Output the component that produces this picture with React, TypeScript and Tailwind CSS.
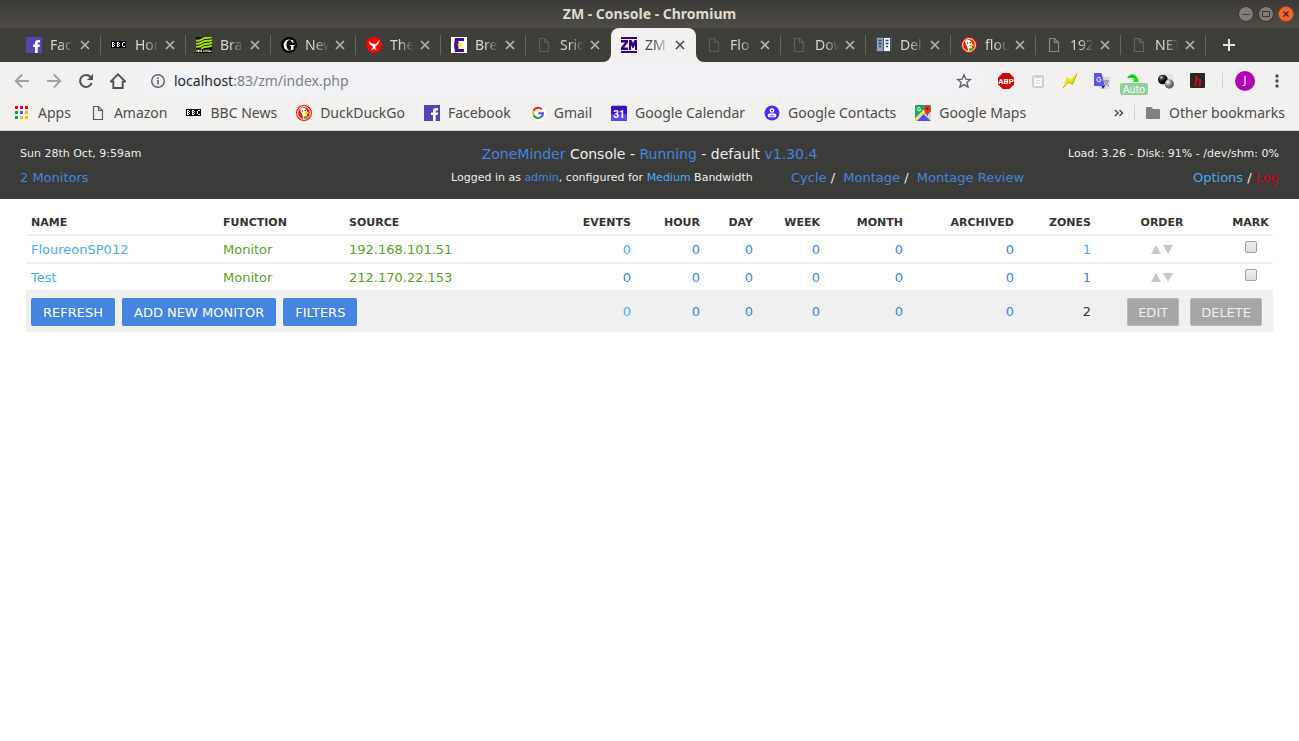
import type { ReactNode } from 'react';

const BLUE = 'text-[#4584dd]';
const SKY = 'text-[#4aabec]';

/* ---------- favicons ---------- */

function FacebookIcon() {
  return (
    <svg width="16" height="16" viewBox="0 0 16 16" aria-hidden="true">
      <rect width="16" height="16" fill="#5246b4" />
      <path d="M9 16V10H7V7.500H9V6C9 3.800 10.200 3 12 3H14V5.400H12.800C12 5.400 11.700 5.700 11.700 6.400V7.500H14L13.600 10H11.700V16Z" fill="#fff" />
    </svg>
  );
}

function BbcIcon() {
  return (
    <svg width="16" height="16" viewBox="0 0 16 16" aria-hidden="true" shapeRendering="crispEdges">
      <rect x="0" y="4" width="15" height="7" fill="#000" />
      <g fill="none" stroke="#fff" strokeWidth="1">
        <path d="M1.500 5V10M2 5.500H3M2 7.500H3M2 9.500H3M3.500 6V7M3.500 8V9" />
        <path d="M6.500 5V10M7 5.500H8M7 7.500H8M7 9.500H8M8.500 6V7M8.500 8V9" />
        <path d="M11.500 6V9M12 5.500H14M12 9.500H14" />
      </g>
    </svg>
  );
}

function MetOfficeIcon() {
  return (
    <svg width="16" height="16" viewBox="0 0 16 16" aria-hidden="true">
      <rect width="16" height="16" fill="#0b0f05" />
      <g fill="none" stroke="#a4e414" strokeWidth="2">
        <path d="M0 3.500C4 4.500 6 1.500 9 1S13 1.500 16 0" />
        <path d="M0 6.500C4 7.500 6 4.500 9 4S13 4.500 16 2.800" />
        <path d="M0 9.500C4 10.500 6 7.500 9 7S13 7.500 16 5.600" />
        <path d="M5 11.500C7 11 8 10 10 9.800S14 10 16 8.400" />
      </g>
      <path d="M1 12.500V15M2.500 13V15M4 12.500V15M5.500 13.500V15M8 13V15M10 12.500V15M12 12.500V15M13.500 13.500V15M15 13.500V15" stroke="#fff" strokeWidth="1" />
    </svg>
  );
}

function GuardianIcon() {
  return (
    <svg width="16" height="16" viewBox="0 0 16 16" aria-hidden="true">
      <circle cx="8" cy="8" r="8" fill="#000" />
      <path d="M8.500 2.400C4.500 2.400 2.700 5 2.700 8S4.500 13.600 8.500 13.600V12.900C6.500 12.700 5.500 11 5.500 8S6.500 3.300 8.500 3.100Z" fill="#fff" />
      <path d="M9.200 2.500L12.500 3.800V6H12L9.200 3.100ZM8.800 8H13.500V8.700L12.500 9.200V12.500L9.200 13.500V12.900L10 12.400V9.200L8.800 8.700Z" fill="#fff" />
    </svg>
  );
}

function BirdIcon() {
  return (
    <svg width="16" height="16" viewBox="0 0 16 16" aria-hidden="true">
      <circle cx="8" cy="8" r="8" fill="#f00" />
      <path d="M2.500 4L7.300 7.200L8 6.300L9 7.500L13.800 3L12.300 7L9.500 9.500L9.300 11L11 13.300L8 12L5 13L7 10.500L6.500 9.300L4 7.500Z" fill="#fff" />
      <path d="M4 5.500L7 8.500M12.500 5L9.200 8.500" stroke="#f99" strokeWidth=".6" />
    </svg>
  );
}

function EuroIcon() {
  return (
    <svg width="16" height="16" viewBox="0 0 16 16" aria-hidden="true">
      <rect width="16" height="16" fill="#fff" />
      <path d="M4 1H13V4H7.500V12H13V15H4L3 8Z" fill="#43108d" />
      <path d="M9 5L10 6.900L12 7.200L10.600 8.600L11 10.600L9 9.600L7 10.600L7.500 8.600L6 7.200L8.100 6.900Z" fill="#ffef00" />
    </svg>
  );
}

function PageIcon({ color }: { color: string }) {
  return (
    <svg width="16" height="16" viewBox="0 0 16 16" aria-hidden="true" fill="none" stroke={color} strokeWidth="1.200">
      <path d="M3.500 1.500H8.500L12.500 5.500V14.500H3.500Z" />
      <path d="M8.500 1.500V5.500H12.500" />
    </svg>
  );
}

function ZmIcon() {
  return (
    <svg width="16" height="16" viewBox="0 0 16 16" aria-hidden="true">
      <rect width="16" height="2" fill="#320080" />
      <rect y="14" width="16" height="2" fill="#320080" />
      <path d="M0 3H7V5.500L3 10.500H7V13H0V10.500L4 5.500H0Z" fill="#320080" />
      <path d="M8 13V3H10.500L12 6L13.500 3H16V13H14V8L12.500 11H11.500L10 8V13Z" fill="#320080" />
    </svg>
  );
}

function ServerIcon() {
  return (
    <svg width="16" height="16" viewBox="0 0 16 16" aria-hidden="true">
      <rect width="16" height="16" fill="#42526a" />
      <rect x="1" y="1" width="6" height="13" fill="#8ea3b8" />
      <rect x="8" y="1" width="6" height="13" fill="#f4f7fa" />
      <path d="M2.500 3.500H5.500M2.500 6.500H5.500M3 9.500H5M9.500 3.500H12.500M9.500 6.500H12.500M10 9.500H12" stroke="#33455c" strokeWidth="1.500" />
      <path d="M0 15.500H16" stroke="#2b3a4e" />
    </svg>
  );
}

function DuckIcon() {
  return (
    <svg width="16" height="16" viewBox="0 0 16 16" aria-hidden="true">
      <circle cx="8" cy="8" r="8" fill="#e01e00" />
      <circle cx="8" cy="8" r="6.400" fill="#e01e00" stroke="#fff" strokeWidth="1" />
      <path d="M4.500 3.500C6.500 2 10.800 3 11 6.500L10.800 12.500L7.500 14L6 9.500C5 7.500 3.800 5.500 4.500 3.500Z" fill="#fff" />
      <path d="M8.300 7.500L12.500 6.800L13 8.400L9.300 10Z" fill="#fc0" />
      <path d="M7.500 11.500L12 10.500L11.500 13L8.500 14Z" fill="#2fb82f" />
      <circle cx="9.300" cy="5.600" r=".8" fill="#234" />
      <circle cx="6.400" cy="6" r=".8" fill="#234" />
    </svg>
  );
}

function AppsIcon() {
  return (
    <svg width="16" height="16" viewBox="0 0 16 16" aria-hidden="true">
      <path d="M1 1H4V4H1ZM6 1H9V4H6ZM11 1H14V4H11Z" fill="#f00010" />
      <path d="M1 6H4V9H1ZM1 11H4V14H1Z" fill="#00a550" />
      <path d="M6 6H9V9H6Z" fill="#4a55ff" />
      <path d="M11 6H14V9H11ZM6 11H9V14H6ZM11 11H14V14H11Z" fill="#ffb900" />
    </svg>
  );
}

function GoogleIcon() {
  return (
    <svg width="16" height="16" viewBox="0 0 16 16" aria-hidden="true" fill="none" strokeWidth="2.100">
      <circle cx="8" cy="8" r="8" fill="#fff" />
      <path d="M11.800 4.400A5 5 0 0 0 3.600 5.700" stroke="#f02a1c" />
      <path d="M3.600 5.700A5 5 0 0 0 3.600 10.300" stroke="#fbbc05" />
      <path d="M3.600 10.300A5 5 0 0 0 11.200 11.900" stroke="#16a84a" />
      <path d="M11.200 11.900A5 5 0 0 0 13 8.200H8.200" stroke="#4a52f5" />
    </svg>
  );
}

function CalendarIcon() {
  return (
    <svg width="16" height="16" viewBox="0 0 16 16" aria-hidden="true">
      <rect x="1" width="14" height="3" fill="#bdbdbd" />
      <rect y="1" width="16" height="15" rx="1" fill="#3a0fd0" />
      <rect y="9" width="16" height="7" rx="1" fill="#5548ff" />
      <text x="8" y="12.500" textAnchor="middle" fontSize="10" fontWeight="700" fontFamily="Roboto, sans-serif" fill="#fff">31</text>
    </svg>
  );
}

function ContactsIcon() {
  return (
    <svg width="16" height="16" viewBox="0 0 16 16" aria-hidden="true">
      <circle cx="8" cy="8" r="7.500" fill="#4a2df0" />
      <circle cx="8" cy="5.500" r="2.300" fill="#fff" />
      <rect x="3.800" y="8.500" width="8.400" height="3.700" rx="1.500" fill="#fff" />
      <circle cx="8" cy="5.500" r="1" fill="#4a2df0" />
      <path d="M5.500 11.200C6 9.800 10 9.800 10.500 11.200Z" fill="#4a2df0" />
    </svg>
  );
}

function MapsIcon() {
  return (
    <svg width="16" height="16" viewBox="0 0 16 16" aria-hidden="true">
      <rect width="16" height="16" rx="1" fill="#1fa463" />
      <path d="M16 7V16L8.500 9Z" fill="#d8d8d8" />
      <path d="M1 16L8 9L15 16Z" fill="#5548ff" />
      <path d="M0 15.500L10 5.500" stroke="#fff" strokeWidth="3" />
      <path d="M0 15.500L10 5.500" stroke="#ffd500" strokeWidth="1.500" />
      <path d="M12.300 12C12 9 9 7 9 3.700A3.300 3.300 0 0 1 15.700 3.700C15.700 7 12.700 9 12.300 12Z" fill="#ea3323" />
      <circle cx="12.300" cy="3.700" r="1.200" fill="#7a1310" />
      <path d="M5.300 3A1.700 1.700 0 1 0 5.700 4.500H4.300" fill="none" stroke="#fff" strokeWidth=".9" />
    </svg>
  );
}

/* ---------- browser chrome ---------- */

interface Tab {
  title: string;
  icon: ReactNode;
  active?: boolean;
}

const TABS: Tab[] = [
  { title: 'Fac', icon: <FacebookIcon /> },
  { title: 'Hom', icon: <BbcIcon /> },
  { title: 'Bra', icon: <MetOfficeIcon /> },
  { title: 'New', icon: <GuardianIcon /> },
  { title: 'The', icon: <BirdIcon /> },
  { title: 'Bre', icon: <EuroIcon /> },
  { title: 'Sric', icon: <PageIcon color="#5e5d58" /> },
  { title: 'ZM', icon: <ZmIcon />, active: true },
  { title: 'Flo', icon: <PageIcon color="#5e5d58" /> },
  { title: 'Dow', icon: <PageIcon color="#5e5d58" /> },
  { title: 'Del', icon: <ServerIcon /> },
  { title: 'flou', icon: <DuckIcon /> },
  { title: '192', icon: <PageIcon color="#8a8983" /> },
  { title: 'NET', icon: <PageIcon color="#66655f" /> },
];

const BOOKMARKS: { label: string; icon: ReactNode }[] = [
  { label: 'Apps', icon: <AppsIcon /> },
  { label: 'Amazon', icon: <PageIcon color="#5a5a5a" /> },
  { label: 'BBC News', icon: <BbcIcon /> },
  { label: 'DuckDuckGo', icon: <DuckIcon /> },
  { label: 'Facebook', icon: <FacebookIcon /> },
  { label: 'Gmail', icon: <GoogleIcon /> },
  { label: 'Google Calendar', icon: <CalendarIcon /> },
  { label: 'Google Contacts', icon: <ContactsIcon /> },
  { label: 'Google Maps', icon: <MapsIcon /> },
];

function TitleBar() {
  return (
    <div className="relative flex h-7 items-center justify-center bg-linear-to-b from-[#3b3a36] to-[#4e4c45]">
      <h1 className="text-sm font-bold text-[#dfdbd2]">ZM - Console - Chromium</h1>
      <div className="absolute right-[5px] flex gap-1">
        <button type="button" aria-label="Minimize">
          <svg width="16" height="16" viewBox="0 0 16 16">
            <circle cx="8" cy="8" r="7.500" fill="#7f7d76" stroke="#35342f" />
            <path d="M4.500 8.500H11.500" stroke="#3a3935" />
          </svg>
        </button>
        <button type="button" aria-label="Maximize">
          <svg width="16" height="16" viewBox="0 0 16 16">
            <circle cx="8" cy="8" r="7.500" fill="#7f7d76" stroke="#35342f" />
            <rect x="4.500" y="5.500" width="7" height="5" fill="none" stroke="#3a3935" />
          </svg>
        </button>
        <button type="button" aria-label="Close window">
          <svg width="16" height="16" viewBox="0 0 16 16">
            <circle cx="8" cy="8" r="7.500" fill="#ee6439" stroke="#a9431f" strokeWidth=".7" />
            <path d="M5.500 5.500L10.500 10.500M10.500 5.500L5.500 10.500" stroke="#4a2313" strokeWidth="1.300" />
          </svg>
        </button>
      </div>
    </div>
  );
}

function TabItem({ title, icon, active }: Tab) {
  return (
    <div
      className={`flex h-full w-[85px] items-center pl-2.5 ${
        active ? 'rounded-t-lg bg-[#f2f1f0] text-[#4c4c4c]' : 'text-[#d8d5cc]'
      }`}
    >
      <span className="shrink-0">{icon}</span>
      <span className="ml-2 w-6 overflow-hidden whitespace-nowrap text-sm mask-r-from-40% mask-r-to-100%">
        {title}
      </span>
      <button type="button" aria-label={`Close ${title}`} className="ml-1">
        <svg width="14" height="14" viewBox="0 0 14 14">
          <path d="M3 3L11 11M11 3L3 11" stroke={active ? '#4c4c4c' : '#b5b3ab'} strokeWidth="1.700" />
        </svg>
      </button>
    </div>
  );
}

function TabStrip() {
  return (
    <div className="flex h-[34px] items-center bg-[#3f3f39] pl-4">
      {TABS.map((tab, i) => {
        const noRule = tab.active || TABS[i + 1]?.active;
        return (
          <div key={tab.title} className="relative flex h-full items-center">
            <TabItem {...tab} />
            {!noRule && <span className="absolute right-0 h-5 w-px bg-[#66655f]" />}
            {tab.active && (
              <>
                <svg className="absolute bottom-0 -left-2" width="8" height="8" viewBox="0 0 8 8">
                  <path d="M8 0V8H0A8 8 0 0 0 8 0Z" fill="#f2f1f0" />
                </svg>
                <svg className="absolute -right-2 bottom-0" width="8" height="8" viewBox="0 0 8 8">
                  <path d="M0 0V8H8A8 8 0 0 1 0 0Z" fill="#f2f1f0" />
                </svg>
              </>
            )}
          </div>
        );
      })}
      <button type="button" aria-label="New tab" className="ml-4">
        <svg width="14" height="14" viewBox="0 0 14 14">
          <path d="M7 1V13M1 7H13" stroke="#e6e3da" strokeWidth="2" />
        </svg>
      </button>
    </div>
  );
}

function Extensions() {
  return (
    <div className="flex items-center gap-4">
      <svg width="16" height="16" viewBox="0 0 16 16" aria-label="ABP">
        <path d="M4.700 0H11.300L16 4.700V11.300L11.300 16H4.700L0 11.300V4.700Z" fill="#d00000" />
        <text x="8" y="11" textAnchor="middle" fontSize="8" fontWeight="700" fontFamily="Roboto, sans-serif" fill="#fff">ABP</text>
      </svg>
      <svg width="16" height="16" viewBox="0 0 16 16" aria-hidden="true">
        <rect x="3" y="3" width="10" height="11" rx="1" fill="#fafafa" stroke="#cfcfcf" strokeWidth="2" />
        <rect x="5" y="2" width="6" height="3" fill="#cfcfcf" />
        <path d="M5.500 7.500H10.500M5.500 10H10.500" stroke="#dedede" />
      </svg>
      <svg width="16" height="16" viewBox="0 0 16 16" aria-hidden="true">
        <path d="M1 15L5 4L8.500 6.500L15 .5L10.500 11.500L6.500 9Z" fill="#f2e500" />
        <path d="M1 15L6.500 9L10.500 11.500L15 .5" fill="none" stroke="#a8a000" strokeWidth=".8" />
      </svg>
      <svg width="16" height="16" viewBox="0 0 16 16" aria-hidden="true">
        <rect x="5" y="4" width="11" height="12" fill="#dcdcdc" />
        <path d="M10 8H15M12.500 7V8M11 8.500C12 11 13 12 15 13M14 8.500C13 11 12 12 10.500 13" fill="none" stroke="#71858d" />
        <path d="M1 0H7.500L11 13H1A1 1 0 0 1 0 12V1A1 1 0 0 1 1 0Z" fill="#5a55f0" />
        <path d="M7.500 13H11L9 16Z" fill="#3b14a8" />
        <path d="M6.700 5.100A2.200 2.200 0 1 0 7.200 6.800H5.200" fill="none" stroke="#fff" strokeWidth="1" />
      </svg>
      <div className="relative h-4 w-4">
        <svg width="16" height="16" viewBox="0 0 16 16" aria-hidden="true">
          <path d="M1 5C3 1 8 0 10.500 3.500C12 5 12.500 7 12.500 9H7C8.500 7 8 5.500 6.500 5C5 4.500 3 5.500 1 5Z" fill="#17e617" />
          <path d="M3 4.500C5 2.500 8 3 9.500 5" fill="none" stroke="#087808" strokeWidth=".8" />
        </svg>
        <span className="absolute top-2.5 left-1/2 h-3 w-7 -translate-x-1/2 rounded-xs bg-[#8fd19a] text-center text-[10px] leading-3 text-white">
          Auto
        </span>
      </div>
      <svg width="16" height="16" viewBox="0 0 16 16" aria-hidden="true">
        <defs>
          <radialGradient id="dark" cx=".35" cy=".3"><stop offset="0" stopColor="#ddd" /><stop offset=".4" stopColor="#444" /><stop offset="1" stopColor="#000" /></radialGradient>
          <radialGradient id="grey" cx=".35" cy=".3"><stop offset="0" stopColor="#fff" /><stop offset=".5" stopColor="#aaa" /><stop offset="1" stopColor="#666" /></radialGradient>
        </defs>
        <circle cx="12.500" cy="4" r="3.300" fill="#e4e4e4" />
        <circle cx="4.800" cy="6.500" r="4.800" fill="url(#dark)" />
        <circle cx="11.300" cy="11" r="4.700" fill="url(#grey)" />
      </svg>
      <svg width="16" height="16" viewBox="0 0 16 16" aria-hidden="true">
        <rect width="15" height="15" rx="1" fill="#272727" />
        <text x="7.500" y="12.500" textAnchor="middle" fontSize="14" fontWeight="700" fontStyle="italic" fontFamily="Liberation Serif, serif" fill="#e00008">h</text>
      </svg>
    </div>
  );
}

function Toolbar() {
  return (
    <div className="flex h-[37px] items-center px-3.5">
      <div className="flex gap-4 text-[#505050]">
        <button type="button" aria-label="Back" className="text-[#a3a3a3]">
          <svg width="16" height="16" viewBox="0 0 16 16" fill="none" stroke="currentColor" strokeWidth="1.900">
            <path d="M15 8H2M8.200 1.500L1.700 8L8.200 14.500" />
          </svg>
        </button>
        <button type="button" aria-label="Forward" className="text-[#a3a3a3]">
          <svg width="16" height="16" viewBox="0 0 16 16" fill="none" stroke="currentColor" strokeWidth="1.900">
            <path d="M1 8H14M7.800 1.500L14.300 8L7.800 14.500" />
          </svg>
        </button>
        <button type="button" aria-label="Reload">
          <svg width="16" height="16" viewBox="0 0 16 16" fill="none" stroke="currentColor" strokeWidth="2">
            <path d="M13.700 10A6 6 0 1 1 12.600 4" />
            <path d="M15 1V7H9Z" fill="currentColor" stroke="none" />
          </svg>
        </button>
        <button type="button" aria-label="Home">
          <svg width="16" height="16" viewBox="0 0 16 16" fill="none" stroke="currentColor" strokeWidth="1.900">
            <path d="M.7 8.600H3.300V15H12.700V8.600H15.300L8 1.300Z" strokeLinejoin="miter" />
          </svg>
        </button>
      </div>
      <div className="ml-3.5 flex h-7 flex-1 items-center rounded-full bg-[#f0f2f5] pr-3 pl-2.5">
        <svg width="16" height="16" viewBox="0 0 16 16" fill="none" stroke="#5f6368" aria-hidden="true">
          <circle cx="8" cy="8" r="6.300" strokeWidth="1.400" />
          <path d="M8 7V11.500M8 4.300V5.900" strokeWidth="1.600" />
        </svg>
        <span className="ml-2 text-sm text-[#7d8085]">
          <span className="text-[#27282b]">localhost</span>:83/zm/index.php
        </span>
        <button type="button" aria-label="Bookmark this page" className="ml-auto">
          <svg width="16" height="16" viewBox="0 0 16 16" fill="none" stroke="#5a5d62" strokeWidth="1.300">
            <path d="M8 1.800L9.800 6.200L14.500 6.500L10.900 9.500L12.100 14.100L8 11.600L3.900 14.100L5.100 9.500L1.500 6.500L6.200 6.200Z" />
          </svg>
        </button>
      </div>
      <div className="ml-3.5">
        <Extensions />
      </div>
      <span className="ml-4 h-4 w-px bg-[#cfcfcf]" />
      <span className="ml-3 flex h-5 w-5 items-center justify-center rounded-full bg-[#b400b4] text-[11px] text-white">
        J
      </span>
      <button type="button" aria-label="Menu" className="ml-3.5">
        <svg width="16" height="16" viewBox="0 0 16 16" fill="#505050">
          <circle cx="8" cy="3" r="1.700" />
          <circle cx="8" cy="8" r="1.700" />
          <circle cx="8" cy="13" r="1.700" />
        </svg>
      </button>
    </div>
  );
}

function BookmarksBar() {
  return (
    <nav className="flex h-8 items-center gap-[19px] border-b border-[#cdd0c9] px-3.5 pb-1 text-sm text-[#4c4c4c]">
      {BOOKMARKS.map(({ label, icon }) => (
        <a key={label} href="#" className="flex items-center gap-2 whitespace-nowrap">
          {icon}
          {label}
        </a>
      ))}
      <div className="ml-auto flex items-center">
        <button type="button" aria-label="More bookmarks">
          <svg width="10" height="10" viewBox="0 0 10 10" fill="none" stroke="#505050" strokeWidth="1.500">
            <path d="M1 2L4 5L1 8M5.500 2L8.500 5L5.500 8" />
          </svg>
        </button>
        <span className="ml-2.5 h-4 w-px bg-[#cfcfcf]" />
        <a href="#" className="ml-2.5 flex items-center gap-2 whitespace-nowrap">
          <svg width="16" height="16" viewBox="0 0 16 16" aria-hidden="true">
            <path d="M2 2H6.500L8 4H14A1 1 0 0 1 15 5V13A1 1 0 0 1 14 14H2A1 1 0 0 1 1 13V3A1 1 0 0 1 2 2Z" fill="#808080" />
          </svg>
          Other bookmarks
        </a>
      </div>
    </nav>
  );
}

/* ---------- console page ---------- */

function ConsoleHeader() {
  return (
    <header className="h-[68px] bg-[#3b3b39] px-5 pt-3 text-[11px] text-[#eeeeee]">
      <div className="grid h-[22px] grid-cols-3 items-center">
        <span>Sun 28th Oct, 9:59am</span>
        <h2 className="text-center text-sm whitespace-nowrap">
          <a href="#" className={BLUE}>ZoneMinder</a> Console - <a href="#" className={BLUE}>Running</a> - default{' '}
          <a href="#" className={BLUE}>v1.30.4</a>
        </h2>
        <span className="text-right">Load: 3.26 - Disk: 91% - /dev/shm: 0%</span>
      </div>
      <div className="mt-0.5 grid h-[22px] grid-cols-[431fr_340fr_488fr] items-center whitespace-nowrap">
        <a href="#" className={`text-[13px] ${BLUE}`}>2 Monitors</a>
        <span>
          Logged in as <a href="#" className={BLUE}>admin</a>, configured for{' '}
          <a href="#" className={SKY}>Medium</a> Bandwidth
        </span>
        <div className="flex justify-between text-[13px]">
          <span>
            <a href="#" className={BLUE}>Cycle</a> /&nbsp; <a href="#" className={BLUE}>Montage</a> /&nbsp;{' '}
            <a href="#" className={BLUE}>Montage Review</a>
          </span>
          <span>
            <a href="#" className={SKY}>Options</a> / <a href="#" className="text-[#d0021b]">Log</a>
          </span>
        </div>
      </div>
    </header>
  );
}

interface Monitor {
  name: string;
  source: string;
  eventsSeen: boolean;
}

const MONITORS: Monitor[] = [
  { name: 'FloureonSP012', source: '192.168.101.51', eventsSeen: true },
  { name: 'Test', source: '212.170.22.153', eventsSeen: false },
];

const COUNTS = ['events', 'hour', 'day', 'week', 'month', 'archived'];

const CELL = 'px-[5px] pt-0.5';
const HEAD = 'px-[5px] pt-1';

function CountCells({ seen, className }: { seen: boolean; className: string }) {
  return (
    <>
      {COUNTS.map(key => (
        <td key={key} className={`text-right ${className}`}>
          <a href="#" className={seen && key === 'events' ? SKY : BLUE}>0</a>
        </td>
      ))}
    </>
  );
}

function MonitorRow({ name, source, eventsSeen }: Monitor) {
  return (
    <tr className="h-7 border-t-2 border-[#f0f0f0]">
      <td className={CELL}><a href="#" className={SKY}>{name}</a></td>
      <td className={CELL}><a href="#" className="text-[#5a9f2b]">Monitor</a></td>
      <td className={CELL}><a href="#" className="text-[#5a9f2b]">{source}</a></td>
      <CountCells seen={eventsSeen} className={CELL} />
      <td className={`text-right ${CELL}`}><a href="#" className={eventsSeen ? SKY : BLUE}>1</a></td>
      <td>
        <div className="flex justify-center gap-0.5">
          <button type="button" aria-label={`Move ${name} up`}>
            <svg width="10" height="9" viewBox="0 0 10 9"><path d="M5 0L10 9H0Z" fill="#c8c8c8" /></svg>
          </button>
          <button type="button" aria-label={`Move ${name} down`}>
            <svg width="10" height="9" viewBox="0 0 10 9"><path d="M0 0H10L5 9Z" fill="#c8c8c8" /></svg>
          </button>
        </div>
      </td>
      <td>
        <input
          type="checkbox"
          aria-label={`Mark ${name}`}
          className="mx-auto mb-1 block h-3 w-3 appearance-none rounded-xs border border-[#a0a0a0] bg-linear-to-b from-[#eeeeee] to-[#dcdcdc]"
        />
      </td>
    </tr>
  );
}

const ACTION = 'h-7 rounded-xs px-3 pt-px text-[13px] text-white bg-[#4584df]';
const DISABLED = 'h-7 rounded-xs border border-[#b8b8b8] px-2.5 pt-px text-[13px] text-[#eeeeee] bg-[#a6a6a6]';

function ConsoleTable() {
  return (
    <main className="px-[26px] pt-[9px]">
      <table className="w-full table-fixed border-collapse text-[13px] text-[#333333]">
        <colgroup>
          <col className="w-[192px]" />
          <col className="w-[126px]" />
          <col className="w-[231px]" />
          <col className="w-[61px]" />
          <col className="w-[69px]" />
          <col className="w-[53px]" />
          <col className="w-[67px]" />
          <col className="w-[83px]" />
          <col className="w-[111px]" />
          <col className="w-[77px]" />
          <col className="w-[132px]" />
          <col className="w-[45px]" />
        </colgroup>
        <thead className="text-[11px]">
          <tr className="h-[27px] text-right">
            <th className={`text-left ${HEAD}`}>NAME</th>
            <th className={`text-left ${HEAD}`}>FUNCTION</th>
            <th className={`text-left ${HEAD}`}>SOURCE</th>
            <th className={HEAD}>EVENTS</th>
            <th className={HEAD}>HOUR</th>
            <th className={HEAD}>DAY</th>
            <th className={HEAD}>WEEK</th>
            <th className={HEAD}>MONTH</th>
            <th className={HEAD}>ARCHIVED</th>
            <th className={HEAD}>ZONES</th>
            <th className="pt-1 text-center">ORDER</th>
            <th className="pt-1 text-center">MARK</th>
          </tr>
        </thead>
        <tbody>
          {MONITORS.map(m => <MonitorRow key={m.name} {...m} />)}
        </tbody>
        <tfoot>
          <tr className="h-[41px] border-t-2 border-[#f0f0f0] bg-[#f0f0f0]">
            <td colSpan={3} className="px-[5px]">
              <div className="flex gap-[7px]">
                <button type="button" className={ACTION}>REFRESH</button>
                <button type="button" className={ACTION}>ADD NEW MONITOR</button>
                <button type="button" className={ACTION}>FILTERS</button>
              </div>
            </td>
            <CountCells seen className="px-[5px]" />
            <td className="px-[5px] text-right">2</td>
            <td colSpan={2} className="pr-[11px]">
              <div className="flex justify-end gap-[11px]">
                <button type="button" disabled className={DISABLED}>EDIT</button>
                <button type="button" disabled className={DISABLED}>DELETE</button>
              </div>
            </td>
          </tr>
        </tfoot>
      </table>
    </main>
  );
}

export default function App() {
  return (
    <div className="min-h-screen bg-white">
      <div className="bg-[#f2f1f0] font-['Noto_Sans',sans-serif]">
        <TitleBar />
        <TabStrip />
        <Toolbar />
        <BookmarksBar />
      </div>
      <div className="font-['DejaVu_Sans',sans-serif]">
        <ConsoleHeader />
        <ConsoleTable />
      </div>
    </div>
  );
}
